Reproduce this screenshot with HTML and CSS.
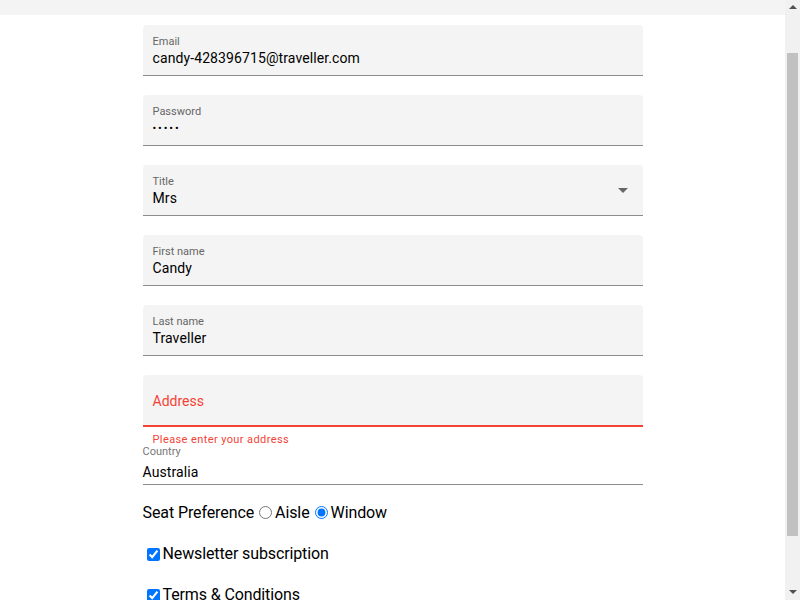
FILE: index.html
```html
<!DOCTYPE html>
<html lang="en">
<head>
    <meta charset="UTF-8">
    <meta name="viewport" content="width=device-width, initial-scale=1.0">
    <title>Traveller Registration</title>
    <link rel="stylesheet" href="styles.css">
</head>
<body>
    <div class="page">
        <header class="topbar"></header>

        <form class="register">
            <div class="field">
                <span class="label">Email</span>
                <span class="value">candy-428396715@traveller.com</span>
            </div>
            <div class="field">
                <span class="label">Password</span>
                <span class="value dots">&bull;&bull;&bull;&bull;&bull;</span>
            </div>
            <div class="field select">
                <span class="label">Title</span>
                <span class="value">Mrs</span>
                <span class="arrow"></span>
            </div>
            <div class="field">
                <span class="label">First name</span>
                <span class="value">Candy</span>
            </div>
            <div class="field">
                <span class="label">Last name</span>
                <span class="value">Traveller</span>
            </div>
            <div class="field invalid">
                <span class="placeholder">Address</span>
            </div>
            <div class="error">Please enter your address</div>

            <div class="plain">
                <span class="label">Country</span>
                <span class="value">Australia</span>
            </div>

            <div class="seat">Seat Preference<label><input type="radio" name="seat">Aisle</label><label><input type="radio" name="seat" checked>Window</label></div>

            <div class="check">
                <label><input type="checkbox" checked>Newsletter subscription</label>
            </div>
            <div class="check">
                <label><input type="checkbox" checked>Terms &amp; Conditions</label>
            </div>
            <button type="button" class="submit">Register</button>
        </form>
    </div>

    <!-- drawn scrollbar, the screenshot browser hides the real one -->
    <div class="scrollbar">
        <span class="up"></span>
        <span class="thumb"></span>
        <span class="down"></span>
    </div>

    <script src="script.js"></script>
</body>
</html>
```

FILE: styles.css
```css
html, body {
    margin: 0;
    padding: 0;
}

body {
    font-family: Roboto, "Liberation Sans", sans-serif;
    color: #000;
    background: #fff;
}

.page {
    width: 785px;
}

.topbar {
    height: 54px;
    background-color: #f4f4f4;
}

.register {
    width: 500px;
    margin: 10px auto 0;
    padding-bottom: 40px;
}

.field {
    position: relative;
    height: 51px;
    box-sizing: border-box;
    margin-bottom: 19px;
    padding: 10px 10px 0;
    background-color: #f4f4f4;
    border-radius: 4px 4px 0 0;
    border-bottom: 1px solid #8c8c8c;
}

.label {
    display: block;
    font-size: 11px;
    line-height: 13px;
    color: #666;
}

.value {
    display: block;
    margin-top: 2px;
    font-size: 14px;
    line-height: 17px;
    letter-spacing: 0.1px;
}

.dots {
    font-size: 11px;
    letter-spacing: 1.9px;
}

.select .arrow {
    position: absolute;
    right: 15px;
    top: 23px;
    border-left: 5px solid transparent;
    border-right: 5px solid transparent;
    border-top: 5px solid #666;
}

.field.invalid {
    margin-bottom: 0;
    height: 52px;
    padding-top: 16px;
    border-bottom: 2px solid #f44336;
}

.placeholder {
    font-size: 14px;
    line-height: 17px;
    color: #f44336;
}

.error {
    padding: 6px 10px 0;
    font-size: 11px;
    line-height: 13px;
    letter-spacing: 0.4px;
    color: #f44336;
}

.plain {
    border-bottom: 1px solid #8c8c8c;
    padding-bottom: 3px;
}

.plain .label {
    line-height: 12px;
    color: #777;
}

.plain .value {
    margin-top: 6px;
}

.seat {
    margin-top: 18px;
    font-size: 16px;
    line-height: 20px;
    letter-spacing: -0.1px;
}

.seat input {
    margin: 3px 3px 0 5px;
    vertical-align: top;
}

.check {
    margin-top: 21px;
    font-size: 16px;
    line-height: 20px;
    letter-spacing: -0.12px;
}

.check input {
    vertical-align: top;
    margin-top: 4px;
}

.submit {
    margin-top: 30px;
    font-family: Roboto, "Liberation Sans", sans-serif;
}

.scrollbar {
    position: fixed;
    top: 0;
    right: 0;
    width: 15px;
    height: 100%;
    background-color: #f1f1f1;
}

.scrollbar .thumb {
    position: absolute;
    left: 2px;
    right: 2px;
    top: 53px;
    height: 483px;
    background-color: #c1c1c1;
}

.scrollbar .up,
.scrollbar .down {
    position: absolute;
    left: 4px;
    border-left: 4px solid transparent;
    border-right: 4px solid transparent;
}

.scrollbar .up {
    top: 5px;
    border-bottom: 4px solid #505050;
}

.scrollbar .down {
    bottom: 6px;
    border-top: 4px solid #505050;
}
```

FILE: script.js
```js
window.scrollTo(0, 39);
```
